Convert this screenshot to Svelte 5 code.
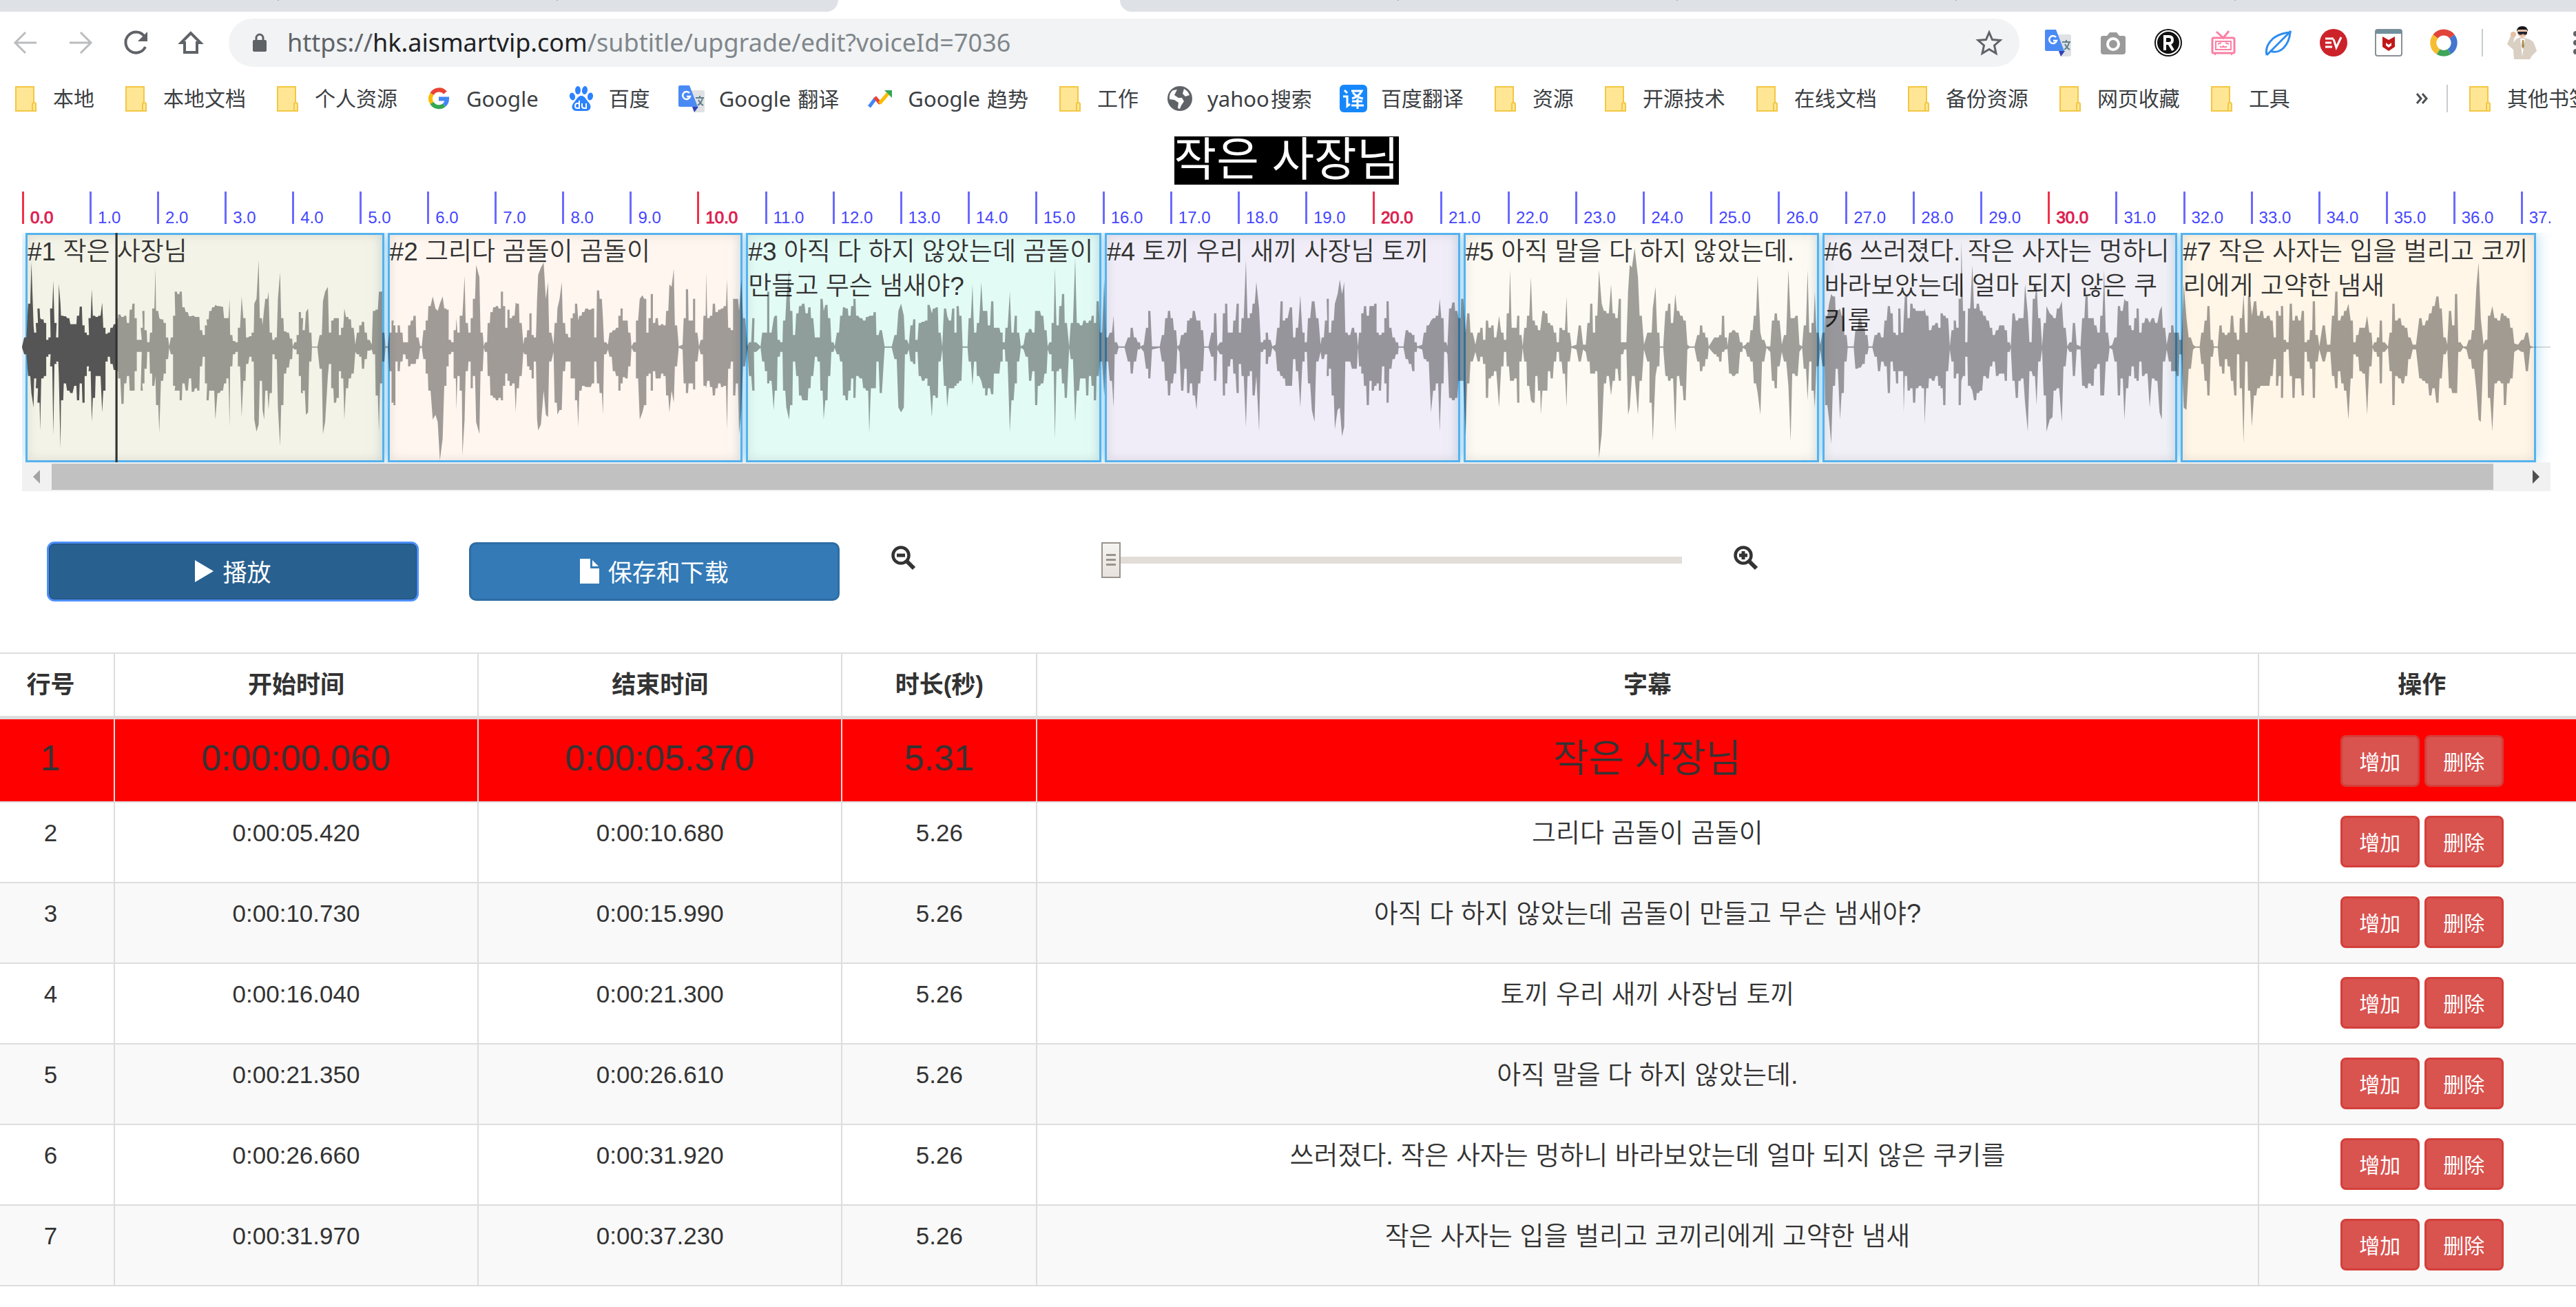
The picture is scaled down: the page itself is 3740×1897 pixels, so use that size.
<script>
  const folder = 'folder';
  const bookmarks = [
    { icon: folder, cjk: '本地' },
    { icon: folder, cjk: '本地文档' },
    { icon: folder, cjk: '个人资源' },
    { icon: 'google', latin: 'Google' },
    { icon: 'baidu', cjk: '百度' },
    { icon: 'translate', latin: 'Google ', cjk: '翻译' },
    { icon: 'trends', latin: 'Google ', cjk: '趋势' },
    { icon: folder, cjk: '工作' },
    { icon: 'globe', latin: 'yahoo', cjk: '搜索' },
    { icon: 'fanyi', cjk: '百度翻译' },
    { icon: folder, cjk: '资源' },
    { icon: folder, cjk: '开源技术' },
    { icon: folder, cjk: '在线文档' },
    { icon: folder, cjk: '备份资源' },
    { icon: folder, cjk: '网页收藏' },
    { icon: folder, cjk: '工具' }
  ];
  const extensions = ['translate', 'camera', 'rbadge', 'tv', 'feather', 'ev', 'shield', 'ring'];

  const rows = [
    { start: '0:00:00.060', end: '0:00:05.370', length: '5.31', text: '작은 사장님', tint: 'olive' },
    { start: '0:00:05.420', end: '0:00:10.680', length: '5.26', text: '그리다 곰돌이 곰돌이', tint: 'peach' },
    { start: '0:00:10.730', end: '0:00:15.990', length: '5.26', text: '아직 다 하지 않았는데 곰돌이 만들고 무슨 냄새야?', tint: 'mint' },
    { start: '0:00:16.040', end: '0:00:21.300', length: '5.26', text: '토끼 우리 새끼 사장님 토끼', tint: 'lilac' },
    { start: '0:00:21.350', end: '0:00:26.610', length: '5.26', text: '아직 말을 다 하지 않았는데.', tint: 'cream' },
    { start: '0:00:26.660', end: '0:00:31.920', length: '5.26', text: '쓰러졌다. 작은 사자는 멍하니 바라보았는데 얼마 되지 않은 쿠키를', tint: 'mist' },
    { start: '0:00:31.970', end: '0:00:37.230', length: '5.26', text: '작은 사자는 입을 벌리고 코끼리에게 고약한 냄새', tint: 'sand' }
  ];
  const seconds = Array.from({ length: 38 }, (_, i) => i);

  // Peaks of the audio as "x,above,below" samples, cut into three chunks.
  const chunks = [
    { offset: -40, peaks: '40,2,2 46,40,30 53,180,120 57,350,190 61,90,250 64,60,130 67,100,170 70,160,230 73,120,345 77,115,130 82,100,120 86,30,40 90,40,30 93,160,80 97,275,365 101,100,70 104,40,60 107,262,120 110,180,420 113,130,220 118,128,150 124,120,180 130,95,190 137,95,160 142,130,220 147,168,150 152,90,230 156,60,120 160,50,80 163,120,100 167,240,310 171,130,210 176,125,120 181,130,120 186,185,270 190,80,180 194,55,60 198,60,40 203,80,70 209,95,95 213,120,100 217,135,130 223,125,235 228,130,150 233,100,120 238,155,180 243,180,180 247,120,100 251,30,20 256,30,20 258,80,180 261,150,150 265,70,90 270,20,20 275,60,110 279,160,160 283,330,120 286,150,240 290,120,355 295,115,140 300,100,110 304,40,50 308,3,3 313,40,30 317,130,160 320,230,180 325,220,180 329,230,220 334,165,150 340,145,180 346,128,130 351,130,185 357,125,170 361,125,180 366,70,80 371,50,40 375,90,150 378,115,220 383,150,180 388,165,180 392,175,300 398,170,190 404,168,180 410,120,150 414,120,130 418,200,330 421,50,80 426,25,30 431,20,20 435,80,80 440,210,290 445,120,140 450,40,70 456,45,40 460,60,60 463,180,300 467,200,350 471,360,320 475,120,140 478,90,260 481,160,300 485,200,180 489,230,260 493,60,190 498,30,30 502,40,50 506,200,250 510,310,410 514,120,240 519,65,110 524,60,85 530,35,50 533,3,3 538,20,10 542,50,30 546,145,120 550,120,190 553,70,180 557,145,280 561,160,270 565,60,60 568,2,2 578,2,2 584,50,90 588,190,360 592,230,310 597,250,120 601,60,70 605,110,170 610,120,230 615,120,210 619,50,100 623,80,130 627,160,300 632,125,170 637,115,130 642,80,110 647,10,20 652,60,30 656,90,40 661,105,90 666,60,50 671,30,15 677,10,10 681,150,30 686,155,200 690,230,350 694,230,150 698,60,60 702,3,3 706,3,3 711,60,100 715,110,230 718,90,240 722,60,60 726,90,100 731,60,60 736,20,30 741,20,50 745,90,80 750,110,70 755,130,70 760,40,50 765,5,5 768,3,3 773,70,50 777,110,110 782,170,180 788,210,300 793,160,280 797,150,310 801,180,470 806,210,380 811,160,160 815,155,80 819,30,30 824,20,20 828,70,130 831,120,260 835,60,120 839,130,180 842,130,450 846,295,300 850,100,100 855,60,60 859,120,170 863,200,120 867,340,310 873,290,360 877,60,100 881,3,3 885,20,20 890,100,120 895,145,200 900,165,210 905,170,220 910,160,210 914,230,220 918,170,160 922,80,110 926,155,140 930,120,160 935,130,150 939,185,270 943,180,170 948,100,120 953,10,20 957,40,30 962,70,80 966,140,95 970,50,130 974,40,60 978,200,300 980,300,345 985,330,320 990,350,180 994,200,280 998,270,290 1002,60,60 1008,10,20 1012,100,230 1015,160,280 1019,200,260 1023,270,260 1027,100,100 1032,55,60 1037,40,60 1041,120,130 1045,140,130 1049,180,220 1053,110,330 1057,130,180 1062,145,160 1068,160,165 1074,155,165 1080,160,150 1084,40,60 1089,235,150 1094,200,190 1098,120,280 1102,20,30 1107,10,10 1112,60,40 1118,70,100 1124,80,120 1128,130,180 1132,160,150 1136,110,125 1141,110,130 1146,60,80 1150,3,3 1156,20,20 1160,110,130 1165,200,300 1170,215,270 1175,200,240 1179,60,120 1183,120,110 1187,220,180 1191,100,100 1196,120,130 1201,90,130 1206,95,110 1210,90,120 1215,150,200 1219,260,270 1223,250,180 1227,325,230 1231,90,80 1236,3,3 1243,10,10 1247,120,150 1251,240,190 1256,110,150 1260,110,150 1264,200,175 1268,60,60 1273,3,3 1278,30,30 1283,130,160 1286,310,170 1290,120,140 1295,130,165 1300,180,200 1305,145,170 1310,155,150 1315,160,165 1320,170,160 1324,280,340 1328,80,90 1333,70,60 1337,200,200 1342,200,150 1346,150,360 1350,280,260 1355,120,80 1361,3,3 1366,20,120 1372,120,180 1375,20,20 1385,3,3 1390,60,60 1395,60,100 1399,230,150 1403,60,140 1409,120,260 1413,130,180 1418,30,40 1423,20,20 1428,110,180 1432,200,250 1437,320,300 1441,150,240 1446,50,60 1452,140,120 1457,170,200 1463,180,220 1469,140,220 1474,165,170 1479,120,120 1486,40,40 1491,40,60 1496,200,180 1500,150,300 1505,175,220 1510,120,120 1516,20,20 1520,3,3 1526,60,30 1532,130,60 1537,165,200 1542,160,220 1547,130,180 1552,170,130' },
    { offset: 1516, peaks: '0,200,210 5,130,120 12,120,130 18,110,170 23,125,180 27,130,355 32,130,170 37,145,170 42,50,60 48,70,190 55,3,3 68,3,3 75,50,50 80,150,250 85,180,270 90,130,250 94,30,30 99,10,10 104,90,60 109,115,70 113,30,20 119,100,120 125,105,140 131,110,130 135,175,160 141,140,290 145,160,200 150,165,210 155,60,60 160,3,10 165,160,160 169,130,250 174,110,170 180,160,170 184,60,160 188,170,150 193,130,140 197,3,3 206,3,3 210,120,60 215,260,160 220,60,60 225,100,120 231,270,140 236,150,170 240,150,200 245,90,170 251,190,195 256,80,110 262,80,110 268,60,60 272,20,10 277,80,60 283,230,350 288,60,220 294,130,150 298,60,60 303,3,3 308,10,10 314,60,40 320,75,140 326,60,100 331,150,240 336,150,160 342,130,150 348,70,110 352,3,10 357,20,30 361,100,100 365,330,380 370,90,100 375,170,90 380,220,150 385,100,210 391,3,3 396,100,50 402,370,310 407,100,180 413,90,130 419,110,130 424,100,200 429,110,120 434,130,160 438,100,220 443,190,120 449,60,60 455,280,200 460,40,60 467,60,140 472,130,250 476,20,30 481,3,3 492,3,3 500,40,60 505,80,110 511,40,60 518,20,10 521,3,3 527,10,20 533,80,90 537,150,130 542,3,10 556,3,3 562,50,60 568,120,140 573,150,200 578,120,150 584,70,110 588,3,3 592,10,20 597,50,180 603,60,90 608,110,190 613,120,150 618,150,200 623,110,260 628,110,150 633,70,100 637,3,3 645,3,3 652,60,40 657,140,140 661,3,10 668,20,30 673,140,200 677,180,150 682,60,80 687,60,50 692,110,110 698,180,190 702,60,70 707,120,120 713,360,330 718,120,120 722,140,100 727,180,200 732,270,120 737,160,350 742,20,20 747,30,10 751,60,70 756,30,40 761,3,3 767,10,20 772,80,100 778,190,120 782,110,130 787,120,160 795,165,160 801,40,50 806,80,100 812,215,250 818,60,60 822,20,20 828,120,150 833,190,260 838,190,310 843,120,60 849,10,20 853,40,50 859,110,30 862,200,120 866,60,90 871,110,200 875,180,340 880,220,260 884,280,250 888,220,370 892,270,330 896,60,60 901,50,60 908,80,90 913,60,90 917,3,3 921,60,80 925,140,110 930,170,160 935,130,240 940,170,140 944,170,180 949,180,160 953,60,150 957,50,180 963,60,80 967,120,150 971,190,230 976,80,90 982,40,50 988,20,30 991,3,3 1000,3,3 1006,70,50 1012,60,70 1018,50,100 1022,20,20 1025,3,3 1034,10,10 1039,60,50 1044,90,60 1050,110,270 1056,120,180 1061,130,150 1066,200,350 1071,120,150 1076,20,20 1080,3,30 1085,160,210 1091,185,220 1096,150,210 1102,120,140 1107,200,140 1113,60,370 1118,140,150 1124,60,60 1131,10,20 1137,60,60 1142,80,40 1147,30,70 1152,110,210 1157,80,130 1162,90,120 1167,40,100 1174,130,250 1180,60,80 1185,30,20 1190,140,80 1194,320,140 1199,80,140 1204,80,130 1209,130,230 1213,50,60 1217,3,3 1222,80,60 1227,130,160 1232,290,220 1237,110,230 1242,90,120 1247,70,180 1250,90,280 1255,150,180 1260,140,180 1265,100,100 1270,90,130 1276,60,60 1281,20,20 1286,80,60 1292,70,110 1297,210,250 1301,60,60 1306,3,3 1315,10,10 1321,90,60 1327,10,10 1332,10,20 1337,100,60 1342,180,110 1347,60,110 1351,130,100 1356,320,460 1361,180,360 1367,150,150 1372,140,120 1378,260,200 1383,140,140 1388,120,90 1394,200,140 1398,20,30 1404,20,10 1409,230,280 1412,340,250 1416,330,120 1421,410,120 1427,290,280 1432,130,140 1438,10,10 1446,60,60 1450,60,230 1454,160,390 1459,250,120 1464,60,80 1467,3,3 1473,3,3 1479,150,120 1484,180,140 1489,100,130 1495,220,350 1500,150,120 1506,130,160 1512,110,220 1517,10,10 1521,3,3 1530,3,3 1537,50,60 1542,90,100 1547,60,80 1552,40,50 1556,3,3' },
    { offset: 3084, peaks: '0,40,30 4,40,40 9,50,60 14,130,20 19,40,10 22,3,5 27,60,110 33,70,120 40,60,110 47,20,20 50,3,3 55,10,10 60,20,40 66,70,60 72,130,150 77,300,190 82,60,280 87,30,60 93,3,3 100,3,20 105,110,140 110,140,170 115,110,80 121,10,20 127,50,60 133,320,160 137,120,390 142,120,110 148,130,120 153,10,20 158,3,3 163,90,90 168,320,220 173,60,60 177,100,180 181,230,250 186,60,80 191,10,10 197,60,80 202,130,240 207,180,300 211,220,400 216,210,160 221,150,90 227,160,300 232,130,190 237,50,60 241,3,3 252,3,3 257,70,90 263,120,85 270,80,70 275,50,30 279,3,3 286,3,3 292,50,40 298,60,100 304,40,60 310,110,80 316,170,190 321,140,60 326,60,100 331,50,150 335,160,100 340,60,100 343,120,270 347,210,120 352,120,180 357,180,170 362,160,230 367,150,170 373,150,160 378,150,170 381,160,320 386,130,170 391,70,130 397,90,140 403,100,120 408,80,160 412,140,170 417,130,240 422,120,100 427,3,10 432,70,60 436,110,130 441,80,110 445,200,240 448,440,140 453,150,120 457,20,40 462,160,160 468,340,180 473,160,220 478,180,190 484,150,180 490,130,120 496,110,130 502,80,80 507,50,60 513,70,120 519,90,110 524,90,110 529,70,140 534,20,20 538,3,3 543,140,140 549,110,210 554,120,140 559,120,130 564,260,230 569,140,350 574,20,100 580,200,120 585,270,240 590,120,60 595,3,10 600,100,200 603,170,350 609,140,300 614,130,290 618,120,180 624,160,170 631,190,310 636,80,80 641,3,3 647,20,20 653,100,120 658,10,10 665,3,10 670,120,160 676,210,170 681,120,150 687,120,160 692,90,90 698,60,70 703,130,200 708,320,200 713,60,60 718,3,3 723,10,10 729,40,60 735,170,200 740,150,130 745,200,300 750,190,170 755,90,120 760,70,80 765,120,130 769,160,140 774,60,60 779,100,120 785,120,110 791,100,250 797,120,130 803,100,140 809,150,270 813,170,300 817,80,60 822,10,10 828,60,60 832,90,100 837,60,100 842,60,120 847,30,30 853,260,250 858,120,260 864,40,90 870,10,10 874,3,3 882,3,3 887,60,70 893,110,140 898,170,200 904,30,40 908,3,3 915,3,3 920,90,80 925,60,110 930,50,50 935,60,80 941,130,140 947,60,200 952,30,30 957,120,170 962,220,400 967,60,60 972,210,180 977,130,330 983,190,200 989,130,170 995,150,160 1001,120,160 1007,130,160 1013,110,120 1019,40,50 1023,150,160 1028,130,120 1032,170,210 1037,30,20 1042,20,10 1048,180,120 1053,110,210 1058,130,130 1064,110,130 1070,150,200 1075,20,20 1080,30,60 1085,70,90 1090,190,210 1095,50,60 1100,3,10 1108,90,60 1114,10,20 1120,10,20 1125,130,120 1131,230,170 1136,110,100 1142,130,150 1147,150,180 1153,180,300 1159,110,130 1164,20,30 1169,50,40 1175,80,100 1181,80,110 1187,130,280 1193,60,80 1197,3,3 1202,20,20 1207,40,40 1212,110,150 1217,20,20 1225,3,3 1230,60,100 1235,180,240 1240,110,120 1246,120,130 1252,90,150 1258,80,120 1264,40,50 1270,10,10 1276,10,10 1284,120,130 1290,90,140 1296,110,150 1302,140,200 1308,170,170 1315,210,230 1321,160,130 1328,40,30 1333,10,10 1338,150,170 1344,90,190 1349,220,190 1355,20,20 1362,3,3 1368,3,10 1374,30,50 1380,70,90 1386,250,180 1390,350,300 1394,120,310 1399,10,20 1404,30,10 1409,130,210 1415,170,350 1421,120,150 1427,110,140 1433,140,150 1438,130,240 1444,120,150 1450,80,130 1455,15,20 1462,10,10 1470,30,20 1478,60,100 1484,5,5 1490,1,1 1522,1,1' }
  ];
  const middle = 473;
  // Each sample is drawn as a short flat top so that neighbouring peaks read as solid bursts.
  const samples = chunks.flatMap(({ offset, peaks }) =>
    peaks.split(' ').flatMap((p) => {
      const [x, up, down] = p.split(',').map(Number);
      const half = up > 240 || down > 240 || up < 20 ? 0 : 2;
      const y = { up: middle - up, down: middle + down };
      return [{ x: x + offset - half, ...y }, { x: x + offset + half, ...y }];
    })
  );
  const outline = [
    ...samples.map((s) => `${s.x},${s.up}`),
    ...samples.toReversed().map((s) => `${s.x},${s.down}`)
  ].join(' ');

  let zoom = $state(0);
</script>

{#snippet icon(name)}
  <svg class="ico" viewBox="0 0 40 40" aria-hidden="true">
    {#if name === 'folder'}
      <path d="M6 3h26v26h3v9H6z" fill="#ffe694" stroke="#f2c744" stroke-width="2" />
      <path d="M30 38v-10q0-2 2.500-2t2.500 2v10z" fill="#ffe694" stroke="#f2c744" stroke-width="2" />
    {:else if name === 'google'}
      <g fill="none" stroke-width="6">
        <path d="M29.500 11.500A12 12 0 0 0 10 13.500" stroke="#ea4335" />
        <path d="M10 13.500a12 12 0 0 0 0 13" stroke="#fbbc05" />
        <path d="M10 26.500a12 12 0 0 0 18 3" stroke="#34a853" />
        <path d="M20 20.500h12q0 5.500-4 9" stroke="#4285f4" />
      </g>
    {:else if name === 'baidu'}
      <g fill="#2c82ff">
        <ellipse cx="7" cy="17" rx="4" ry="5.500" transform="rotate(-15 7 17)" />
        <ellipse cx="15" cy="8" rx="4" ry="6" />
        <ellipse cx="25" cy="8" rx="4" ry="6" transform="rotate(8 25 8)" />
        <ellipse cx="33" cy="17" rx="4" ry="5.500" transform="rotate(12 33 17)" />
        <path d="M20 16c-5 0-7 6-11 10-5 6-2 12 4 12h14c6 0 9-6 4-12-4-4-6-10-11-10z" />
      </g>
      <path d="M17 23v11h-3q-3 0-3-3.500t3-3.500h3M21 27v4q0 3 3 3h3v-7" fill="none" stroke="#fff" stroke-width="2" />
    {:else if name === 'translate'}
      <path d="M15 8h21q3 0 3 3v26q0 3-3 3H24z" fill="#dfe1e4" />
      <path d="M24 40l6-8h-9z" fill="#3142b0" />
      <path d="M3 1h14l12 31H3q-2 0-2-2V3q0-2 2-2z" fill="#4a8af4" />
      <path d="M17 12a5.500 5.500 0 1 0 1 5h-5" fill="none" stroke="#fff" stroke-width="2.500" />
      <path d="M26 19h12M32 16v3M36 20q-2 7-7 10M30 22q3 6 7 8" fill="none" stroke="#5f7f8c" stroke-width="2" />
    {:else if name === 'trends'}
      <g fill="none" stroke-width="5">
        <path d="M4 32l9-12" stroke="#4285f4" />
        <path d="M12 18l8 9" stroke="#ea4335" />
        <path d="M19 27l12-14" stroke="#fbbc05" />
      </g>
      <path d="M26 8h11v11z" fill="#34a853" />
    {:else if name === 'globe'}
      <circle cx="20" cy="20" r="18" fill="#5f6368" />
      <path d="M16 7l-4 8 6 4h5l3 5-4 6-2 5-3-1 1-8-6-4-7-1q-1-9 5-13zM26 6q6 3 8 9l-6 2-4-4z" fill="#fff" />
    {:else if name === 'fanyi'}
      <rect width="40" height="40" rx="6" fill="#1687fb" />
      <g fill="none" stroke="#fff" stroke-width="3">
        <path d="M7 8l4 4M5 17h6v14l4-3M17 9h15q-4 8-14 11M19 11q6 8 15 9M18 24h15M17 30h18M26 20v15" />
      </g>
    {:else if name === 'camera'}
      <path d="M2 13q0-3 3-3h6l4-5h10l4 5h6q3 0 3 3v20q0 4-4 4H6q-4 0-4-4z" fill="#9a9a9a" />
      <circle cx="20" cy="22" r="8" fill="none" stroke="#fff" stroke-width="4" />
    {:else if name === 'rbadge'}
      <circle cx="20" cy="20" r="20" fill="#111" />
      <circle cx="20" cy="20" r="17" fill="none" stroke="#fff" stroke-width="2" />
      <path d="M15 31V11h6q5 0 5 5t-5 5h-5m5 0l6 10" fill="none" stroke="#fff" stroke-width="4" />
    {:else if name === 'tv'}
      <g fill="none" stroke="#fb7fa3" stroke-width="3">
        <path d="M10 4l10 9L28 3" />
        <rect x="4" y="13" width="32" height="22" rx="2" />
        <path d="M9 18h22v12H9zM8 38v-3M32 38v-3" stroke-width="2" />
        <path d="M12 22l5-2M28 22l-5-2M15 25q2 3 5 0q3 3 5 0" stroke-width="2" />
      </g>
    {:else if name === 'feather'}
      <path d="M3 38Q0 25 12 14 22 6 37 5q-1 14-10 23-9 8-19 4" fill="none" stroke="#2d8cf0" stroke-width="3" />
      <path d="M3 38Q16 25 38 3" fill="none" stroke="#2d8cf0" stroke-width="3" />
    {:else if name === 'ev'}
      <circle cx="20" cy="20" r="20" fill="#cc2229" />
      <path d="M8 14h12M8 20h9M8 26h10M20 15l4 12 7-15" fill="none" stroke="#fff" stroke-width="3" />
    {:else if name === 'shield'}
      <rect x="1" y="1" width="38" height="38" rx="3" fill="#fff" stroke="#8b8f96" stroke-width="2" />
      <path d="M1 7V3q0-2 2-2h34q2 0 2 2v4z" fill="#70909c" />
      <path d="M11 11l9 5 9-5v15l-9 6-9-6z" fill="#c01818" />
      <path d="M16 20l4 3 4-3v4l-4 3-4-3z" fill="#fff" />
    {:else if name === 'ring'}
      <g fill="none" stroke-width="9">
        <path d="M8 11a15 15 0 0 1 24 0" stroke="#e0443a" />
        <path d="M32 11a15 15 0 0 1-4 22" stroke="#4377cf" />
        <path d="M28 33a15 15 0 0 1-16 0" stroke="#3fa558" />
        <path d="M12 33A15 15 0 0 1 8 11" stroke="#f5bd2f" />
      </g>
    {/if}
  </svg>
{/snippet}

<div class="window">
  <div class="tabs">
    <div class="strip left"><i></i><i></i></div>
    <div class="strip right"><i></i><i></i><i></i><i></i></div>
  </div>

  <header class="toolbar">
    <nav class="nav">
      <button class="tool dim" aria-label="后退"><svg class="ico" viewBox="0 0 40 40"><path d="M36 20H6M20 5L5 20l15 15" fill="none" stroke="currentColor" stroke-width="3" /></svg></button>
      <button class="tool dim" aria-label="前进"><svg class="ico" viewBox="0 0 40 40"><path d="M4 20h30M20 5l15 15-15 15" fill="none" stroke="currentColor" stroke-width="3" /></svg></button>
      <button class="tool" aria-label="刷新"><svg class="ico" viewBox="0 0 40 40"><path d="M32 10A15 15 0 1 0 34 26" fill="none" stroke="currentColor" stroke-width="4" /><path d="M37 4v14H23z" fill="currentColor" /></svg></button>
      <button class="tool" aria-label="主页"><svg class="ico" viewBox="0 0 40 40"><path d="M20 6L6 20h5v14h18V20h5z" fill="none" stroke="currentColor" stroke-width="4" /></svg></button>
    </nav>
    <div class="address">
      <svg class="lock" viewBox="0 0 20 28" aria-hidden="true"><rect y="10" width="20" height="17" rx="2" fill="#5f6368" /><path d="M5 11V7a5 5 0 0 1 10 0v4" fill="none" stroke="#5f6368" stroke-width="3" /></svg>
      <span class="url"><span class="scheme">https://</span><span class="host">hk.aismartvip.com</span>/subtitle/upgrade/edit?voiceId=7036</span>
      <button class="tool star" aria-label="收藏"><svg class="ico" viewBox="0 0 40 40"><path d="M20 5l4.500 10.500L36 16.500l-8.500 7.500L30 35.500l-10-6-10 6 2.500-11.500L4 16.500l11.500-1z" fill="none" stroke="currentColor" stroke-width="3" /></svg></button>
    </div>
    <div class="extensions">
      {#each extensions as name}
        <button class="tool" aria-label={name}>{@render icon(name)}</button>
      {/each}
    </div>
    <span class="divider"></span>
    <button class="tool avatar" aria-label="个人资料">
      <svg viewBox="0 0 48 48" aria-hidden="true">
        <path d="M17 18q8-4 14 0 10 1 13 12l2 6-7 7-3 5H13l-1-14-9-8 6-14 5 3-2 9z" fill="#d9cfc2" />
        <path d="M22 18l3 26 4-26z" fill="#fff" /><path d="M25 20l-1 9 2 4 2-4-1-9z" fill="#a98d52" />
        <circle cx="25" cy="9" r="7" fill="#e7bfa3" /><path d="M17 8q0-8 8-8t8 8l-2-3H19z" fill="#16161a" />
        <path d="M18 8h14v3q-3 3-6 0-3 3-7 0z" fill="#26262b" /><circle cx="12" cy="12" r="4" fill="#e7bfa3" />
      </svg>
    </button>
    <button class="tool dots" aria-label="菜单"><svg viewBox="0 0 10 34" aria-hidden="true"><g fill="#5f6368"><circle cx="5" cy="4" r="4" /><circle cx="5" cy="17" r="4" /><circle cx="5" cy="30" r="4" /></g></svg></button>
  </header>

  <nav class="bookmarks">
    {#each bookmarks as b}
      <a href="#bookmark">{@render icon(b.icon)}<span>{#if b.latin}<span class="latin">{b.latin}</span>{/if}{b.cjk ?? ''}</span></a>
    {/each}
    <button class="tool more" aria-label="更多书签"><svg viewBox="0 0 18 16" aria-hidden="true"><path d="M2 1l6 7-6 7M10 1l6 7-6 7" fill="none" stroke="#4b4e52" stroke-width="3" /></svg></button>
    <span class="divider"></span>
    <a href="#bookmark">{@render icon(folder)}<span>其他书签</span></a>
  </nav>

  <main>
    <h1><span>{rows[0].text}</span></h1>

    <section class="timeline">
      <div class="ruler">
        {#each seconds as s}
          <span class={['mark', s % 10 === 0 && 'ten']}>{s}.0</span>
        {/each}
      </div>
      <div class="wave">
        {#each rows as row, i}
          <div class={['region', row.tint]} style:flex-grow={row.length}>#{i + 1} {row.text}</div>
        {/each}
        <svg class="peaks" viewBox="0 0 4605 950" preserveAspectRatio="none" aria-hidden="true">
          <defs>
            <clipPath id="played"><rect width="172" height="950" /></clipPath>
            <clipPath id="ahead"><rect x="172" width="4433" height="950" /></clipPath>
          </defs>
          <polygon points={outline} fill="#555" clip-path="url(#played)" />
          <polygon points={outline} fill="#000" fill-opacity="0.370" clip-path="url(#ahead)" />
          <rect x="170" width="4" height="950" fill="#333" />
        </svg>
      </div>
      <div class="scroll">
        <svg viewBox="0 0 12 20" aria-hidden="true"><path d="M11 0v20L1 10z" fill="#a3a3a3" /></svg>
        <span class="thumb"></span>
        <svg viewBox="0 0 12 20" aria-hidden="true"><path d="M1 0v20l10-10z" fill="#505050" /></svg>
      </div>
    </section>

    <section class="controls">
      <div class="two">
        <button class="btn primary playing"><svg viewBox="0 0 28 34" aria-hidden="true"><path d="M1 1v32l27-16z" fill="#fff" /></svg>播放</button>
      </div>
      <div class="two">
        <button class="btn primary"><svg viewBox="0 0 28 36" aria-hidden="true"><path d="M0 0h15v14h13v22H0z" fill="#fff" /><path d="M18 2v9h9z" fill="#fff" /></svg>保存和下载</button>
      </div>
      <div class="one">
        <button class="tool" aria-label="缩小"><svg class="lens" viewBox="0 0 36 36"><circle cx="14" cy="14" r="11.500" fill="none" stroke="#333" stroke-width="4.500" /><path d="M8 14h12" stroke="#333" stroke-width="5" /><path d="M22 22l11 11" stroke="#333" stroke-width="6" /></svg></button>
      </div>
      <div class="three">
        <input type="range" min="0" max="100" bind:value={zoom} aria-label="缩放" />
      </div>
      <div class="one">
        <button class="tool" aria-label="放大"><svg class="lens" viewBox="0 0 36 36"><circle cx="14" cy="14" r="11.500" fill="none" stroke="#333" stroke-width="4.500" /><path d="M8 14h12M14 8v12" stroke="#333" stroke-width="5" /><path d="M22 22l11 11" stroke="#333" stroke-width="6" /></svg></button>
      </div>
    </section>

    <div class="sheet">
      <table>
        <colgroup><col class="c-no" /><col class="c-time" /><col class="c-time" /><col class="c-len" /><col class="c-text" /><col /></colgroup>
        <thead>
          <tr><th>行号</th><th>开始时间</th><th>结束时间</th><th>时长(秒)</th><th>字幕</th><th>操作</th></tr>
        </thead>
        <tbody>
          {#each rows as row, i}
            <tr class={{ current: i === 0 }}>
              <td>{i + 1}</td>
              <td>{row.start}</td>
              <td>{row.end}</td>
              <td>{row.length}</td>
              <td class="subtitle">{row.text}</td>
              <td>
                <div class="actions"><button class="btn danger">增加</button><button class="btn danger">删除</button></div>
              </td>
            </tr>
          {/each}
        </tbody>
      </table>
    </div>
  </main>
</div>

<style>
  :global(body) {
    margin: 0;
    background: #fff;
  }
  .window {
    overflow: hidden;
    color: #333;
    font: 35px/50px 'Liberation Sans', 'Noto Sans CJK SC', 'Noto Sans CJK KR', sans-serif;
  }
  .window * {
    box-sizing: border-box;
  }
  svg {
    display: block;
    flex: none;
  }
  .ico {
    width: 40px;
    height: 40px;
  }
  .tool {
    flex: none;
    padding: 0;
    border: 0;
    background: none;
    color: #5f6368;
  }
  .dim {
    color: #babcbe;
  }
  .divider {
    flex: none;
    width: 2px;
    height: 40px;
    background: #c9cccf;
  }

  .tabs {
    display: flex;
    justify-content: space-between;
    height: 17px;
  }
  .strip {
    display: flex;
    background: #dee1e6;
  }
  .strip i {
    width: 405px;
    height: 1px;
    border-right: 2px solid #a8abb0;
  }
  .left {
    width: 1217px;
    border-bottom-right-radius: 18px;
  }
  .right {
    flex: none;
    width: calc(100% - 1626px);
    border-bottom-left-radius: 18px;
  }

  .toolbar {
    display: flex;
    align-items: center;
    height: 90px;
    margin-right: -5px;
    padding-left: 17px;
  }
  .nav,
  .extensions {
    display: flex;
    gap: 40px;
  }
  .address {
    display: flex;
    flex: 1;
    align-items: center;
    height: 70px;
    margin: 0 36px 0 35px;
    padding: 0 24px 0 35px;
    border-radius: 35px;
    background: #f1f3f4;
  }
  .lock {
    width: 20px;
    height: 28px;
    margin-right: 30px;
  }
  .url {
    color: #80868b;
    font-family: 'Noto Sans', sans-serif;
    font-size: 36px;
  }
  .scheme {
    color: #5f6368;
  }
  .host {
    color: #202124;
  }
  .star {
    margin-left: auto;
  }
  .extensions {
    margin-right: 35px;
  }
  .avatar {
    width: 48px;
    height: 48px;
    margin: 0 50px 0 32px;
  }
  .dots svg {
    width: 10px;
    height: 34px;
  }

  .bookmarks {
    display: flex;
    gap: 40px;
    align-items: center;
    height: 72px;
    margin-right: -20px;
    padding-left: 17px;
    font-family: 'Noto Sans', 'Noto Sans CJK SC', sans-serif;
    font-size: 30px;
  }
  .bookmarks a {
    display: flex;
    flex: none;
    gap: 20px;
    align-items: center;
    color: #3c4043;
    text-decoration: none;
    white-space: pre;
  }
  .latin {
    margin-right: 2px;
    font-size: 31px;
  }
  .more {
    margin-left: auto;
  }
  .more svg {
    width: 18px;
    height: 16px;
  }
  .more + .divider {
    margin: 0 -14px 0 -13px;
  }

  h1 {
    margin: 19px 4px 10px 0;
    font: 400 67px/68px 'Liberation Sans', 'Noto Sans CJK KR', sans-serif;
    text-align: center;
  }
  h1 span {
    display: inline-block;
    height: 70px;
    background: #000;
    color: #fff;
  }

  .timeline {
    margin: 0 37px 0 32px;
  }
  .ruler {
    display: flex;
    height: 60px;
    overflow: hidden;
  }
  .mark {
    flex: 0 0 2.671%;
    height: 47px;
    padding: 26px 0 0 9px;
    border-left: 3px solid #6a6aff;
    color: #4646ff;
    font-size: 24px;
    line-height: 24px;
  }
  .ten {
    border-color: #f0304a;
    color: #dc2050;
    -webkit-text-stroke: 1px #dc2050;
  }
  .wave {
    position: relative;
    display: flex;
    gap: 5px;
    height: 333px;
    padding: 0 21px 0 5px;
    overflow: hidden;
  }
  .region {
    flex: 1 1 0;
    min-width: 0;
    border: 3px solid #55b3ee;
    box-shadow: 0 0 20px rgba(85, 179, 238, 0.5), inset 0 0 16px rgba(0, 0, 0, 0.1);
    font: 350 37px/50px 'Liberation Sans', 'Noto Sans CJK KR', sans-serif;
  }
  .olive { background: #f3f3e7; }
  .peach { background: #fff6f0; }
  .mint { background: #e3fbf5; }
  .lilac { background: #f0edf8; }
  .cream { background: #fdfaf3; }
  .mist { background: #f1f0f6; }
  .sand { background: #fff6e8; }
  .peaks {
    position: absolute;
    inset: 0;
    width: 100%;
    height: 100%;
  }
  .scroll {
    display: flex;
    gap: 16px;
    align-items: center;
    height: 42px;
    padding: 0 15px;
    background: #f1f1f1;
  }
  .scroll svg {
    width: 12px;
    height: 20px;
  }
  .thumb {
    flex: 1;
    height: 38px;
    margin-right: 40px;
    background: #c1c1c1;
  }

  .controls {
    display: grid;
    grid-template-columns: repeat(12, 1fr);
    margin: 74px 37px 75px 32px;
  }
  .controls > div {
    padding: 0 37px;
  }
  .two {
    grid-column: span 2;
  }
  .three {
    grid-column: span 3;
  }
  .btn {
    display: flex;
    align-items: center;
    justify-content: center;
    border: 3px solid;
    color: #fff;
    font-family: inherit;
  }
  .primary {
    gap: 13px;
    width: 100%;
    height: 85px;
    padding: 0 0 2px;
    border-color: #2e6da4;
    border-radius: 10px;
    background: #337ab7;
    font-size: 35px;
  }
  .primary svg {
    width: 28px;
    height: 36px;
  }
  .playing {
    border-color: #204d74;
    background: #286090;
    outline: 3px solid #4d90fe;
    outline-offset: -2px;
  }
  .lens {
    width: 36px;
    height: 36px;
    margin: 5px 0 0 1px;
  }
  input[type='range'] {
    display: block;
    width: 100%;
    height: 52px;
    margin: 0;
    appearance: none;
    background: none;
  }
  input[type='range']::-webkit-slider-runnable-track {
    height: 10px;
    background: #e2ddd6;
  }
  input[type='range']::-webkit-slider-thumb {
    width: 28px;
    height: 52px;
    margin-top: -21px;
    border: 2px solid #99948c;
    appearance: none;
    background:
      linear-gradient(#99948c, #99948c) center 15px / 14px 3px no-repeat,
      linear-gradient(#99948c, #99948c) center 22px / 14px 3px no-repeat,
      linear-gradient(#99948c, #99948c) center 29px / 14px 3px no-repeat,
      linear-gradient(#f5f4f1, #e7e2dd);
  }

  .sheet {
    margin: 0 -15px 0 -20px;
  }
  table {
    width: 100%;
    border-collapse: collapse;
    table-layout: fixed;
    text-align: center;
  }
  .c-no { width: 4.900%; }
  .c-time { width: 14%; }
  .c-len { width: 7.500%; }
  .c-text { width: 47%; }
  th,
  td {
    padding: 20px;
    border: 2px solid #ddd;
    vertical-align: top;
  }
  th {
    border-bottom-width: 5px;
  }
  td {
    padding: 19px 20px 21px;
  }
  tbody tr:nth-child(odd) {
    background: #f9f9f9;
  }
  .subtitle {
    font-family: 'Liberation Sans', 'Noto Sans CJK KR', sans-serif;
    font-size: 38px;
    font-weight: 350;
  }
  tbody tr.current {
    background: #f00;
    font-size: 52px;
    line-height: 75px;
  }
  .current .subtitle {
    font-size: 56px;
  }
  .actions {
    display: flex;
    gap: 7px;
    justify-content: center;
  }
  .current .actions {
    padding-top: 4px;
  }
  .danger {
    width: 115px;
    height: 75px;
    padding: 0 0 2px;
    border-color: #d43f3a;
    border-radius: 8px;
    background: #d9534f;
    font-size: 30px;
  }
</style>
